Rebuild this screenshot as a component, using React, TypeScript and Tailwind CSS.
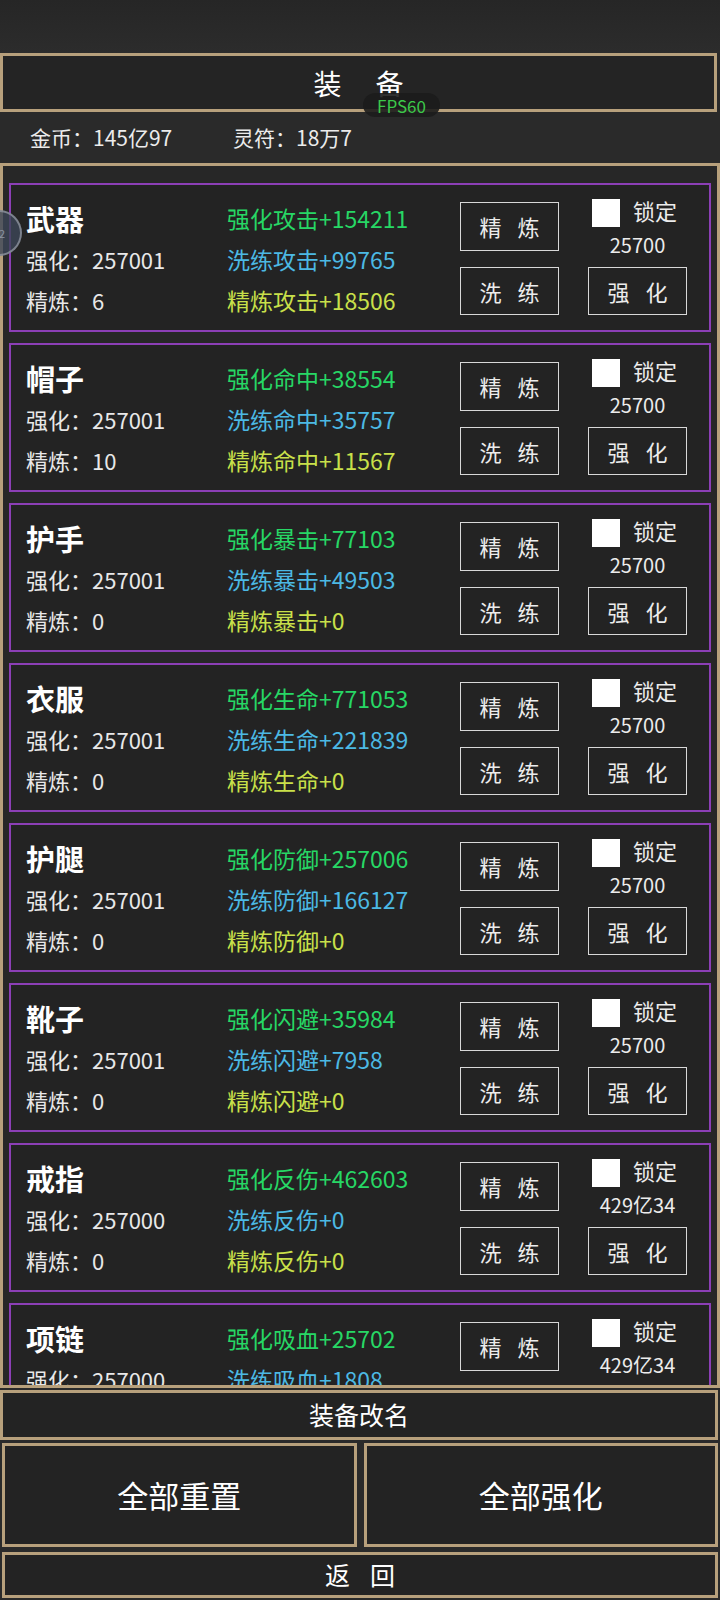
import React from "react";

type Gear = {
  name: string;
  qh: string;
  jl: string;
  attr: string;
  a: string;
  b: string;
  c: string;
  cost: string;
};

const gears: Gear[] = [
  { name: "武器", qh: "257001", jl: "6", attr: "攻击", a: "154211", b: "99765", c: "18506", cost: "25700" },
  { name: "帽子", qh: "257001", jl: "10", attr: "命中", a: "38554", b: "35757", c: "11567", cost: "25700" },
  { name: "护手", qh: "257001", jl: "0", attr: "暴击", a: "77103", b: "49503", c: "0", cost: "25700" },
  { name: "衣服", qh: "257001", jl: "0", attr: "生命", a: "771053", b: "221839", c: "0", cost: "25700" },
  { name: "护腿", qh: "257001", jl: "0", attr: "防御", a: "257006", b: "166127", c: "0", cost: "25700" },
  { name: "靴子", qh: "257001", jl: "0", attr: "闪避", a: "35984", b: "7958", c: "0", cost: "25700" },
  { name: "戒指", qh: "257000", jl: "0", attr: "反伤", a: "462603", b: "0", c: "0", cost: "429亿34" },
  { name: "项链", qh: "257000", jl: "0", attr: "吸血", a: "25702", b: "1808", c: "0", cost: "429亿34" },
];

const SmallBtn = ({ a, b, className = "" }: { a: string; b: string; className?: string }) => (
  <div
    className={`flex items-center justify-center gap-[16px] w-[99px] border-[1.5px] border-[#d8d8d8] text-[22px] text-[#ececec] ${className}`}
  >
    <span>{a}</span>
    <span>{b}</span>
  </div>
);

const GearCard = ({ g }: { g: Gear }) => (
  <div className="flex shrink-0 h-[149px] border-2 border-[#8c3fb6] bg-[#232323] pl-[15px]">
    <div className="w-[201px] pt-[13px] flex flex-col">
      <div className="h-[41px] flex items-center text-[29px] font-bold text-white">{g.name}</div>
      <div className="h-[41px] flex items-center text-[22px] text-[#e8e8e8]">强化：{g.qh}</div>
      <div className="h-[41px] flex items-center text-[22px] text-[#e8e8e8]">精炼：{g.jl}</div>
    </div>
    <div className="w-[233px] pt-[13px] flex flex-col text-[23px]">
      <div className="h-[41px] flex items-center text-[#27d765]">
        强化{g.attr}+{g.a}
      </div>
      <div className="h-[41px] flex items-center text-[#4cb9e4]">
        洗练{g.attr}+{g.b}
      </div>
      <div className="h-[41px] flex items-center text-[#c9e04a]">
        精炼{g.attr}+{g.c}
      </div>
    </div>
    <div className="flex flex-col">
      <SmallBtn a="精" b="炼" className="mt-[17px] h-[49px]" />
      <SmallBtn a="洗" b="练" className="mt-[16px] h-[48px]" />
    </div>
    <div className="ml-[29px] w-[99px] flex flex-col">
      <div className="mt-[14px] h-[28px] flex items-center">
        <div className="ml-[4px] w-[28px] h-[28px] bg-white" />
        <span className="ml-[13px] -mt-[5px] text-[22px] text-[#ececec]">锁定</span>
      </div>
      <div className="h-[38px] -mt-[1px] flex items-center justify-center text-[20px] text-[#ececec]">{g.cost}</div>
      <SmallBtn a="强" b="化" className="mt-[3px] h-[48px]" />
    </div>
  </div>
);

export default function App() {
  return (
    <div className="relative w-[720px] h-[1600px] overflow-hidden bg-[#2a2a2a] font-['Noto_Sans_CJK_SC','Noto_Sans',sans-serif] text-[#ececec]">
      <div className="h-[53px] bg-gradient-to-b from-[#262626] to-[#2c2c2c]" />

      <div className="relative h-[59px] mr-[3px] border-[3px] border-[#b7a07c] bg-[#242424] flex items-center justify-center gap-[34px] text-[28px] text-white">
        <span>装</span>
        <span>备</span>
        <div className="absolute left-[360px] top-[37px] w-[77px] h-[24px] rounded-full bg-[#1c1c1c]/90 flex items-center justify-center text-[17px] leading-none text-[#3cc84a]">
          FPS60
        </div>
      </div>

      <div className="h-[51px] flex items-center pl-[30px] text-[21px] text-[#ececec]">
        <span className="w-[203px]">金币：145亿97</span>
        <span>灵符：18万7</span>
      </div>

      <div className="h-[1225px] border-[3px] border-[#b7a07c] bg-[#272727] overflow-hidden px-[6px] pt-[17px] flex flex-col gap-[11px]">
        {gears.map((g) => (
          <GearCard key={g.name} g={g} />
        ))}
      </div>

      <div className="mt-[2px] mr-[2px] h-[50px] border-[3px] border-[#b7a07c] bg-[#232323] flex items-center justify-center text-[25px] text-white">
        装备改名
      </div>

      <div className="mt-[3px] flex gap-[7px] px-[2px]">
        <div className="flex-1 h-[104px] border-[3px] border-[#b7a07c] bg-[#232323] flex items-center justify-center text-[31px] text-white">
          全部重置
        </div>
        <div className="flex-1 h-[104px] border-[3px] border-[#b7a07c] bg-[#232323] flex items-center justify-center text-[31px] text-white">
          全部强化
        </div>
      </div>

      <div className="mt-[5px] mx-[2px] h-[46px] border-[3px] border-[#b7a07c] bg-[#232323] flex items-center justify-center gap-[20px] text-[25px] text-white">
        <span>返</span>
        <span>回</span>
      </div>

      <div className="absolute left-[-24px] top-[210px] w-[46px] h-[46px] rounded-full border-2 border-[#9aa0aa]/70 bg-[#3c4658]/80 flex items-center justify-center text-[11px] text-[#8c94a2]">
        22
      </div>
    </div>
  );
}
